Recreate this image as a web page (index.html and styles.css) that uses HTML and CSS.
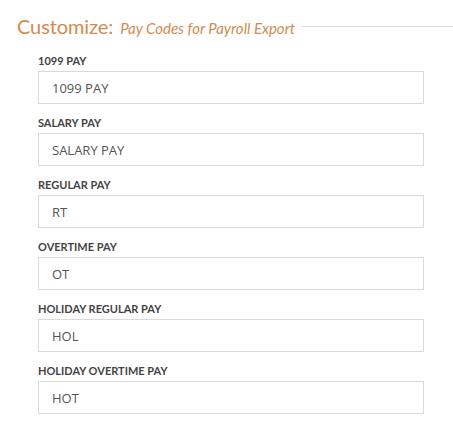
FILE: index.html
```html
<!DOCTYPE html>
<html>
<head>
<meta charset="utf-8">
<link rel="stylesheet" href="styles.css">
</head>
<body>
<div class="page">
  <div class="header">
    <span class="title">Customize:</span>
    <span class="subtitle">Pay Codes for Payroll Export</span>
    <span class="rule"></span>
  </div>
  <div class="fields">
    <div class="field">
      <div class="label">1099 PAY</div>
      <div class="box">1099 PAY</div>
    </div>
    <div class="field">
      <div class="label">SALARY PAY</div>
      <div class="box">SALARY PAY</div>
    </div>
    <div class="field">
      <div class="label">REGULAR PAY</div>
      <div class="box">RT</div>
    </div>
    <div class="field">
      <div class="label">OVERTIME PAY</div>
      <div class="box">OT</div>
    </div>
    <div class="field">
      <div class="label">HOLIDAY REGULAR PAY</div>
      <div class="box">HOL</div>
    </div>
    <div class="field">
      <div class="label">HOLIDAY OVERTIME PAY</div>
      <div class="box">HOT</div>
    </div>
  </div>
</div>
</body>
</html>
```
FILE: styles.css
```css
html, body {
  margin: 0;
  padding: 0;
  background: #fff;
}
.page {
  width: 453px;
  height: 440px;
  box-sizing: border-box;
  padding-top: 12px;
}
.header {
  display: flex;
  align-items: baseline;
  padding-left: 17px;
  height: 28px;
  color: #d28b52;
}
.title {
  font-family: "Lato", sans-serif;
  font-size: 20px;
  line-height: 28px;
  letter-spacing: -0.1px;
}
.subtitle {
  font-family: "Lato", sans-serif;
  font-style: italic;
  font-size: 15px;
  margin-left: 7px;
}
.rule {
  flex: 1;
  align-self: center;
  border-top: 1px solid #dcdcdc;
  margin-left: 6px;
}
.fields {
  padding-left: 38px;
  width: 386px;
  display: flex;
  flex-direction: column;
  gap: 12px;
  margin-top: 14px;
}
.field {
  display: flex;
  flex-direction: column;
  gap: 3px;
}
.label {
  font-family: "Lato", sans-serif;
  font-weight: 700;
  font-size: 11px;
  line-height: 14px;
  color: #444;
}
.box {
  height: 33px;
  box-sizing: border-box;
  border: 1px solid #dadada;
  padding-left: 13px;
  font-family: "Open Sans", sans-serif;
  font-size: 13px;
  line-height: 32px;
  color: #555;
}
```
